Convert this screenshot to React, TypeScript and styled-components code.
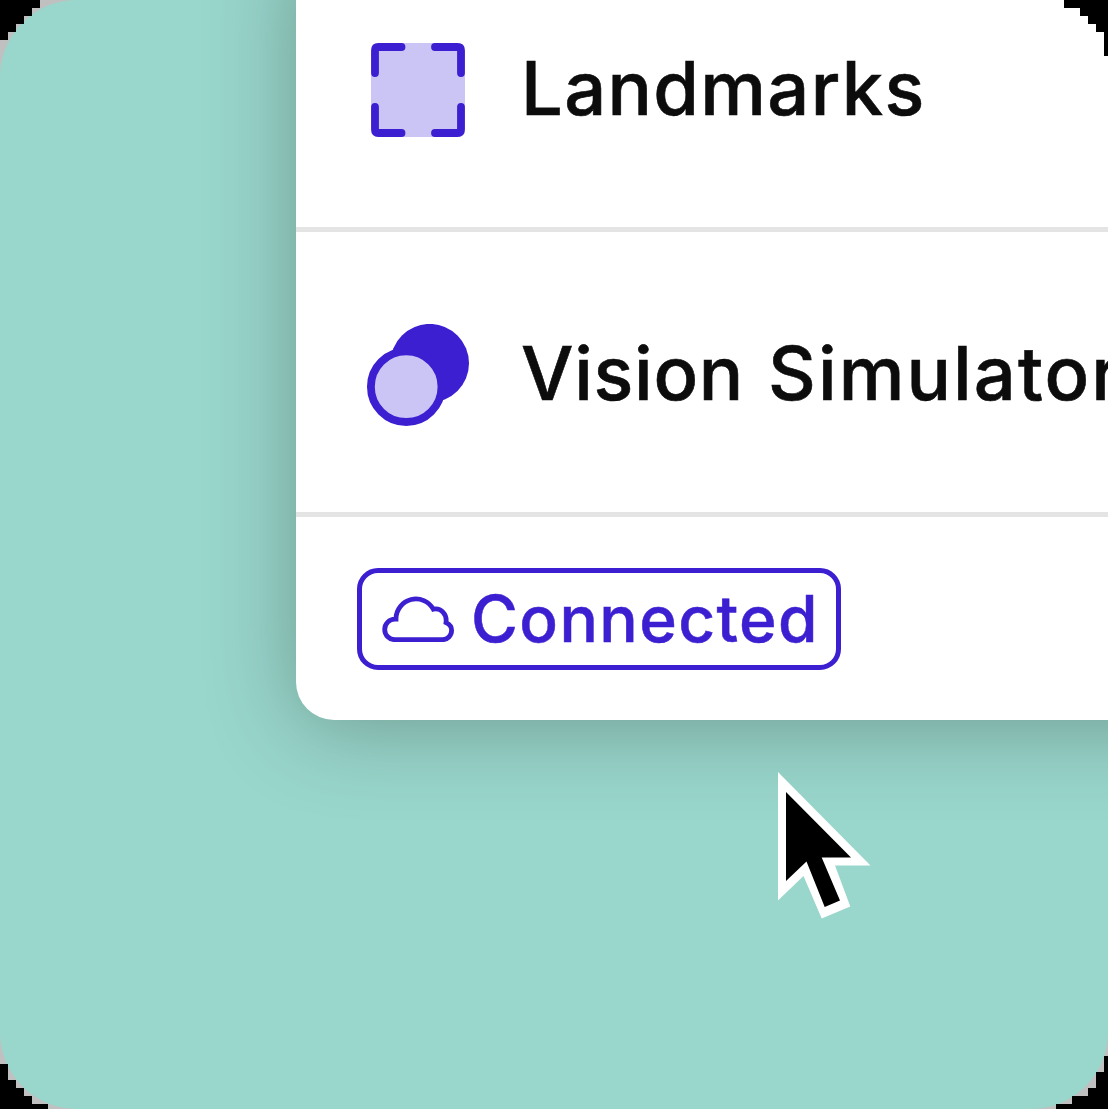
import React from 'react';
import styled, { createGlobalStyle } from 'styled-components';

const GlobalStyle = createGlobalStyle`
  * { box-sizing: border-box; }
  html, body { margin: 0; padding: 0; background: #000; overflow: hidden; }
`;

const indigo = '#3b1fd1';
const lavender = '#cbc5f5';

const Frame = styled.main`
  position: relative;
  width: 1108px;
  height: 1109px;
  overflow: hidden;
  background: #c0c0c0;
  font-family: Inter, 'Liberation Sans', sans-serif;
  clip-path: polygon(
    0 40px, 8px 40px, 8px 32px, 16px 32px, 16px 24px, 24px 24px, 24px 16px, 32px 16px, 32px 8px, 40px 8px, 40px 0,
    1064px 0, 1064px 8px, 1080px 8px, 1080px 16px, 1088px 16px, 1088px 24px, 1096px 24px, 1096px 32px, 1104px 32px, 1104px 56px, 1108px 56px,
    1108px 1056px, 1104px 1056px, 1104px 1072px, 1096px 1072px, 1096px 1088px, 1088px 1088px, 1088px 1096px, 1072px 1096px, 1072px 1104px, 1056px 1104px, 1056px 1109px,
    48px 1109px, 48px 1104px, 32px 1104px, 32px 1096px, 24px 1096px, 24px 1088px, 16px 1088px, 16px 1080px, 8px 1080px, 8px 1064px, 0 1064px
  );
`;

const Stage = styled.div`
  height: 100%;
  padding-left: 296px;
  overflow: hidden;
  background: #99d6cc;
  border-radius: 77px 0 77px 77px;
`;

const Panel = styled.section`
  display: flex;
  flex-direction: column;
  width: 1100px;
  height: 773px;
  margin-top: -53px;
  background: #fff;
  border-bottom-left-radius: 38px;
  box-shadow: 0 6px 86px rgba(60, 85, 75, 0.46);
`;

const Row = styled.div`
  display: flex;
  align-items: center;
  flex: none;
  height: 285px;
  padding: 5px 0 0 66px;
  border-bottom: 5px solid #e4e4e4;
`;

const IconSlot = styled.div`
  display: flex;
  align-items: center;
  justify-content: center;
  flex: none;
  width: 112px;
  height: 112px;
`;

const Label = styled.div`
  display: flex;
  gap: 24px;
  margin-left: 47px;
  padding-bottom: 3px;
  color: #0c0c0c;
  font-size: 74px;
  font-weight: 500;
  line-height: 90px;
  white-space: nowrap;
  -webkit-text-stroke: 0.6px currentColor;
`;

const Word = styled.span<{ $spacing: number }>`
  letter-spacing: ${(p) => p.$spacing}px;
`;

const Footer = styled.footer`
  flex: 1;
  padding: 51px 61px;
`;

const Badge = styled.div`
  display: flex;
  align-items: center;
  width: 484px;
  height: 102px;
  padding-left: 20px;
  border: 5px solid ${indigo};
  border-radius: 21px;
  color: ${indigo};
`;

const BadgeText = styled.span`
  margin-left: 17px;
  font-size: 64px;
  font-weight: 500;
  line-height: 80px;
  letter-spacing: 1.4px;
  -webkit-text-stroke: 0.5px currentColor;
`;

const Pointer = styled.svg`
  position: absolute;
  left: 765px;
  top: 760px;
`;

function LandmarksIcon() {
  return (
    <svg width="94" height="94" viewBox="0 0 94 94" fill="none">
      <rect width="94" height="94" rx="8" fill={lavender} />
      <path
        d="M30.500 4H7.500Q4 4 4 7.500V30M64 4H86.500Q90 4 90 7.500V30M4 64V86.500Q4 90 7.500 90H30.500M64 90H86.500Q90 90 90 86.500V64"
        stroke={indigo}
        strokeWidth="7.800"
        strokeLinecap="round"
      />
    </svg>
  );
}

function VisionIcon() {
  return (
    <svg width="102" height="102" viewBox="0 0 102 102">
      <circle cx="62.700" cy="39.200" r="39.300" fill={indigo} />
      <circle cx="39.200" cy="62.700" r="35.300" fill={lavender} stroke={indigo} strokeWidth="7.800" />
    </svg>
  );
}

function CloudIcon() {
  return (
    <svg width="72" height="46" viewBox="0 0 72 46" fill="none">
      <path
        d="M13 43.700A10.300 10.300 0 0 1 13 23.100H14V22.400A19.900 19.900 0 0 1 51.300 13.200C58.900 11.600 65.200 18 64 26.600C67.500 28.200 69.600 31 69.600 34.300C69.600 39.600 65.500 43.700 60.500 43.700Z"
        stroke={indigo}
        strokeWidth="4.800"
      />
    </svg>
  );
}

export default function App() {
  return (
    <>
      <GlobalStyle />
      <Frame>
        <Stage>
          <Panel>
            <Row>
              <IconSlot><LandmarksIcon /></IconSlot>
              <Label><Word $spacing={1.3}>Landmarks</Word></Label>
            </Row>
            <Row>
              <IconSlot><VisionIcon /></IconSlot>
              <Label>
                <Word $spacing={0.7}>Vision</Word>
                <Word $spacing={2.1}>Simulator</Word>
              </Label>
            </Row>
            <Footer>
              <Badge>
                <CloudIcon />
                <BadgeText>Connected</BadgeText>
              </Badge>
            </Footer>
          </Panel>
        </Stage>
        <Pointer width="120" height="170" viewBox="0 0 120 170">
          <path d="M13 12L105.500 105.500H70L85.300 146.500L56.700 158.500L38.500 116L13 140.500Z" fill="#fff" />
          <path d="M21 32V121L41.500 101.500L59.700 147L75 140.500L56.700 97.500H86Z" fill="#000" />
        </Pointer>
      </Frame>
    </>
  );
}
